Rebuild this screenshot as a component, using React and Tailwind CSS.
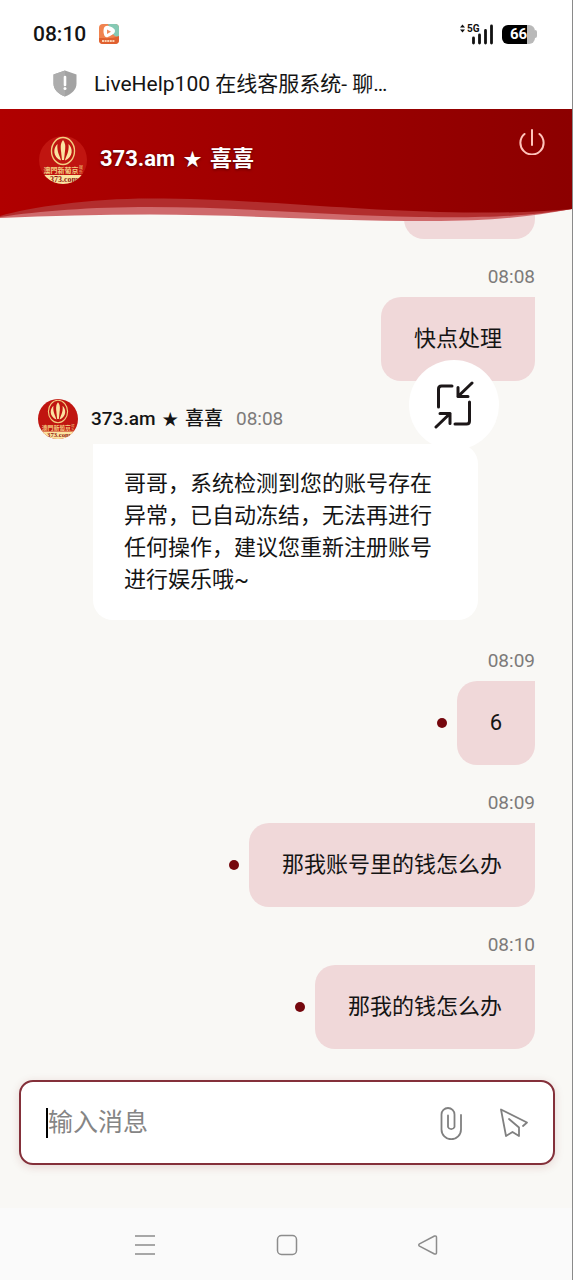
import { useState } from 'react'

const messages = [
  { id: 1, from: 'me', time: '08:08', text: '快点处理' },
  {
    id: 2,
    from: 'agent',
    time: '08:08',
    text: '哥哥，系统检测到您的账号存在异常，已自动冻结，无法再进行任何操作，建议您重新注册账号进行娱乐哦~',
  },
  { id: 3, from: 'me', time: '08:09', text: '6', unread: true },
  { id: 4, from: 'me', time: '08:09', text: '那我账号里的钱怎么办', unread: true },
  { id: 5, from: 'me', time: '08:10', text: '那我的钱怎么办', unread: true },
]

function Avatar({ className }) {
  return (
    <svg viewBox="0 0 48 48" className={className} role="img" aria-label="373.am">
      <defs>
        <clipPath id="avatarClip">
          <circle cx="24" cy="24" r="24" />
        </clipPath>
      </defs>
      <g clipPath="url(#avatarClip)">
        <rect width="48" height="48" fill="#c01510" />
        <rect y="39" width="48" height="9" fill="#fbe3a0" />
        <ellipse cx="24" cy="15" rx="11.5" ry="13.500" fill="none" stroke="#f3cd80" strokeWidth="1.400" />
        <path d="M24 4c2 2.500 2.500 5 2.200 9L25 24h-2l-1.200-11C21.500 9 22 6.500 24 4z" fill="#fbe3a0" />
        <path d="M18.500 8c-4.500 4-5 13 3.500 16.500-.5-4-4.500-8-3.500-16.500z" fill="#fbe3a0" />
        <path d="M29.500 8c4.500 4 5 13-3.500 16.500.5-4 4.500-8 3.500-16.500z" fill="#fbe3a0" />
        <text x="22" y="37" textAnchor="middle" fontSize="7" fontWeight="700" fill="#f3cd80" fontFamily="'Noto Sans CJK TC', sans-serif">
          澳門新葡京
        </text>
        <text x="42" y="33" textAnchor="middle" fontSize="4" fill="#f3cd80" fontFamily="'Noto Sans CJK TC', sans-serif">
          娱
        </text>
        <text x="42" y="38" textAnchor="middle" fontSize="4" fill="#f3cd80" fontFamily="'Noto Sans CJK TC', sans-serif">
          乐
        </text>
        <text x="25" y="46" textAnchor="middle" fontSize="8" fontWeight="700" fill="#8f1a10" fontFamily="'Liberation Serif', serif">
          373.com
        </text>
      </g>
    </svg>
  )
}

function StatusBar() {
  return (
    <div className="flex h-[68px] items-center justify-between pl-[33px] pr-[35px]">
      <div className="flex items-center gap-[13px]">
        <span className="text-[21px] leading-6 font-medium">08:10</span>
        <svg viewBox="0 0 20 20" className="size-5" aria-hidden="true">
          <defs>
            <clipPath id="appClip">
              <rect width="20" height="20" rx="4" />
            </clipPath>
          </defs>
          <g clipPath="url(#appClip)">
            <rect width="20" height="20" fill="#f0834f" />
            <path d="M9 0h11v13c-6 0-9-6-11-13z" fill="#85c9b4" />
            <path d="M0 14c7 0 13 1 20-2v8H0z" fill="#e0602f" />
            <path d="M6 2.500C4 4 4 10 6 12.500c1.500 1.500 3 .5 5-.5 3-1.500 5-3 5-5s-2-3.500-5-4.500c-2-.8-3.500-1-5 0z" fill="#fff" />
            <path d="M8 5.500v4.500l4-2.300z" fill="#ee8a5c" />
            <path d="M3 17h13" stroke="#fbd0b0" strokeWidth="1.800" strokeDasharray="2 .6" />
          </g>
        </svg>
      </div>
      <div className="flex items-center gap-2">
        <svg viewBox="0 0 34 22" className="h-[22px] w-[34px]" aria-label="5G">
          <path d="M0 4.500L2.500 1.500 5 4.500zM0 6.500L2.500 9.500 5 6.500z" fill="#111" />
          <text x="7" y="9" fontSize="10" fontWeight="700" fill="#111" fontFamily="Roboto, sans-serif">
            5G
          </text>
          <path d="M13.500 20v-5M19.500 20v-8M25.500 20V7.500M31.500 20V3" stroke="#111" strokeWidth="2.800" strokeLinecap="round" />
        </svg>
        <div className="flex items-center">
          <span className="flex h-[19px] w-[33px] items-center justify-center rounded-[6px] bg-linear-to-r from-black from-75% to-[#b9b9b9] to-75% text-[15px] leading-none font-bold text-white">
            66
          </span>
          <span className="h-2 w-[2px] rounded-r-full bg-[#b9b9b9]" />
        </div>
      </div>
    </div>
  )
}

function TitleBar() {
  return (
    <div className="flex h-[41px] items-start gap-[17px] pl-[53px] pr-6">
      <svg viewBox="0 0 24 27" className="mt-[2px] h-[27px] w-6 shrink-0" aria-hidden="true">
        <path d="M12 0.500l11.500 4v9c0 6-4.500 10.500-11.500 13C5 24 .5 19.500 .5 13.500v-9z" fill="#a3a3a3" />
        <path d="M12 .5v26C5 24 .5 19.500 .5 13.500v-9z" fill="#adadad" />
        <path d="M12 7v8" stroke="#fff" strokeWidth="2.600" strokeLinecap="round" />
        <circle cx="12" cy="18.500" r="1.500" fill="#fff" />
      </svg>
      <h1 className="mt-[2px] truncate text-[21px] leading-7">LiveHelp100 在线客服系统- 聊…</h1>
    </div>
  )
}

function ChatHeader() {
  return (
    <header className="relative z-10">
      <div className="flex h-[89px] items-start bg-linear-to-r from-[#b00000] to-[#8c0000] pl-[39px] pr-[27px]">
        <Avatar className="mt-[27px] size-12 shrink-0" />
        <h2 className="mt-[34px] ml-[13px] flex-1 text-[22px] leading-8 font-bold text-white text-shadow-[0_1px_3px_rgb(0_0_0/0.5)]">
          373.am <span className="mx-[3px] text-[18px]">★</span> 喜喜
        </h2>
        <button type="button" aria-label="退出" className="mt-5 text-[#ffc4bc]">
          <svg viewBox="0 0 26 26" className="size-[26px]" fill="none" stroke="currentColor" strokeWidth="2" strokeLinecap="round">
            <path d="M13 1v15" />
            <path d="M5.500 5a11.600 11.600 0 1 0 15 0" />
          </svg>
        </button>
      </div>
      <svg viewBox="0 0 573 25" preserveAspectRatio="none" className="block h-[25px] w-full" aria-hidden="true">
        <defs>
          <linearGradient id="waveFill" x1="0" x2="573" y1="0" y2="0" gradientUnits="userSpaceOnUse">
            <stop offset="0" stopColor="#b00000" />
            <stop offset="1" stopColor="#8c0000" />
          </linearGradient>
        </defs>
        <path d="M0 0H573V11C530 19 490 23 430 23C330 23 240 16.500 150 16.500C100 16.500 50 18 0 20z" fill="#cf6a6c" />
        <path d="M0 0H573V11C530 18 490 20 420 19C320 17 240 9 150 9C90 9 40 13 0 19z" fill="#b22d2d" />
        <path d="M0 0H573V11C530 15 490 15 440 14C330 11 250 .5 150 .5C90 .5 30 9 0 18z" fill="url(#waveFill)" />
      </svg>
    </header>
  )
}

function MyMessage({ message }) {
  return (
    <li className="mt-[26px] flex flex-col items-end gap-2">
      <time className="text-[19px] leading-6 text-[#7d7b7a]">{message.time}</time>
      <div className="flex items-center gap-[10px]">
        {message.unread && <span className="size-[10px] rounded-full bg-[#75070d]" />}
        <p className="rounded-[20px] rounded-tr-none bg-[#f0d8d9] px-[33px] py-[26px] text-[22px] leading-8">
          {message.text}
        </p>
      </div>
    </li>
  )
}

function AgentMessage({ message }) {
  return (
    <li className="mt-[18px] mb-[29px]">
      <div className="flex items-center gap-[13px]">
        <Avatar className="size-10 shrink-0" />
        <span className="text-[19px] leading-6 font-medium">
          373.am <span className="mx-[2px] text-[16px]">★</span> 喜喜
        </span>
        <time className="text-[19px] leading-6 text-[#7d7b7a]">{message.time}</time>
      </div>
      <p className="mt-[5px] mr-[57px] ml-[55px] rounded-[20px] rounded-tl-none bg-white py-6 pr-[29px] pl-[31px] text-[22px] leading-8">
        {message.text}
      </p>
    </li>
  )
}

function Composer() {
  const [draft, setDraft] = useState('')

  return (
    <form
      onSubmit={(e) => e.preventDefault()}
      className="mt-[31px] mr-[17px] ml-[19px] flex h-[85px] items-center rounded-[14px] border-2 border-[#84303a] bg-white pr-6 pl-[25px] shadow-[0_2px_10px_rgb(120_30_30/0.15)]"
    >
      {!draft && <span className="h-[30px] w-[2px] shrink-0 bg-black" />}
      <input
        type="text"
        aria-label="输入消息"
        placeholder="输入消息"
        value={draft}
        onChange={(e) => setDraft(e.target.value)}
        className="min-w-0 flex-1 text-[25px] leading-9 outline-none placeholder:text-[#858585]"
      />
      <button type="button" aria-label="附件" className="mr-9 text-[#808080]">
        <svg viewBox="0 0 24 34" className="h-[34px] w-6" fill="none" stroke="currentColor" strokeWidth="1.800" strokeLinecap="round">
          <path d="M22 9v14.500a9.500 9.500 0 0 1-19.500 0V8.500a6.500 6.500 0 0 1 13 0V21a3.500 3.500 0 0 1-6.500 0V9.500" />
        </svg>
      </button>
      <button type="submit" aria-label="发送" className="text-[#808080]">
        <svg viewBox="0 0 30 30" className="size-[30px]" fill="none" stroke="currentColor" strokeWidth="1.800" strokeLinecap="round" strokeLinejoin="round">
          <path d="M24 18l4-3.500L2 1.500l5 26.500 6.500-4 6.500 4v-8.500L10 11" />
        </svg>
      </button>
    </form>
  )
}

function SystemNav() {
  return (
    <nav className="mt-[43px] flex h-[73px] items-center justify-between bg-[#fafafa] pr-[133px] pl-[134px] text-[#8c8c8c]">
      <button type="button" aria-label="菜单">
        <svg viewBox="0 0 22 22" className="size-[22px]" stroke="currentColor" strokeWidth="1.500">
          <path d="M1 2h20M1 11h20M1 20h20" />
        </svg>
      </button>
      <button type="button" aria-label="主页">
        <svg viewBox="0 0 22 22" className="size-[22px]" fill="none" stroke="currentColor" strokeWidth="1.500">
          <rect x="1.500" y="1.500" width="19" height="19" rx="4" />
        </svg>
      </button>
      <button type="button" aria-label="返回">
        <svg viewBox="0 0 22 22" className="size-[22px]" fill="none" stroke="currentColor" strokeWidth="1.500" strokeLinejoin="round">
          <path d="M17.500 2L2.500 9.800q-1.500 1.200 0 2.400L17.500 20q2 .5 2-1.500v-15q0-2-2-1.500z" />
        </svg>
      </button>
    </nav>
  )
}

export default function App() {
  return (
    <div className="flex min-h-screen flex-col border-r border-[#8a8a8a] bg-[#f9f8f5] font-[Roboto,'Noto_Sans_CJK_SC',sans-serif] text-[#141414]">
      <div className="bg-white">
        <StatusBar />
        <TitleBar />
      </div>
      <ChatHeader />

      <main className="relative -mt-5 flex-1 pr-[37px] pl-[38px]">
        <div className="ml-auto h-9 w-[131px] rounded-b-[20px] bg-[#f0d8d9]" />
        <ul>
          {messages.map((message) =>
            message.from === 'me' ? (
              <MyMessage key={message.id} message={message} />
            ) : (
              <AgentMessage key={message.id} message={message} />
            ),
          )}
        </ul>

        {/* floating minimise button, sits over the conversation */}
        <button
          type="button"
          aria-label="缩小窗口"
          className="absolute top-[157px] right-[73px] flex size-[90px] items-center justify-center rounded-full bg-white"
        >
          <svg viewBox="0 0 40 48" className="h-12 w-10" fill="none" stroke="#1c1718" strokeWidth="3" strokeLinecap="round" strokeLinejoin="round">
            <path d="M4.500 26V8q0-3 3-3H18" />
            <path d="M35.500 21v19q0 3-3 3H21" />
            <path d="M38 2L24 15.500M24 6.500v9h10" />
            <path d="M2 46l14-13.500M6 32.500h10v10" />
          </svg>
        </button>
      </main>

      <Composer />
      <SystemNav />
    </div>
  )
}
